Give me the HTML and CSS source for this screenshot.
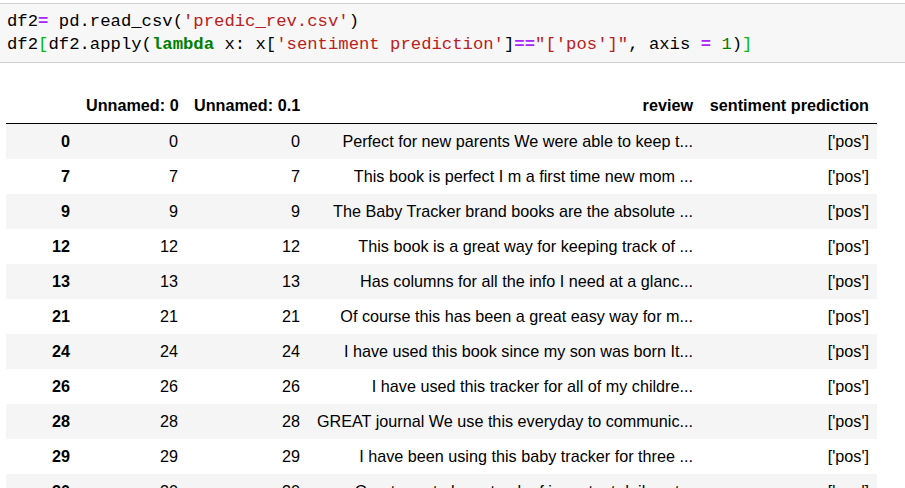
FILE: index.html
```html
<!DOCTYPE html>
<html>
<head>
<meta charset="utf-8">
<link rel="stylesheet" href="styles.css">
</head>
<body>
<div class="cell">
<pre class="code">df2<span class="op">=</span> pd.read_csv(<span class="str">'predic_rev.csv'</span>)
df2<span class="br">[</span>df2.apply(<span class="kw">lambda</span> x: x[<span class="str">'sentiment prediction'</span>]<span class="op">==</span><span class="str">"['pos']"</span>, axis <span class="op">=</span> <span class="num">1</span>)<span class="br">]</span></pre>
</div>
<table class="df">
<colgroup>
<col class="c0"><col class="c1"><col class="c2"><col class="c3"><col class="c4">
</colgroup>
<thead>
<tr><th></th><th>Unnamed: 0</th><th>Unnamed: 0.1</th><th>review</th><th>sentiment prediction</th></tr>
</thead>
<tbody>
<tr><th>0</th><td>0</td><td>0</td><td>Perfect for new parents We were able to keep t...</td><td>['pos']</td></tr>
<tr><th>7</th><td>7</td><td>7</td><td>This book is perfect I m a first time new mom ...</td><td>['pos']</td></tr>
<tr><th>9</th><td>9</td><td>9</td><td>The Baby Tracker brand books are the absolute ...</td><td>['pos']</td></tr>
<tr><th>12</th><td>12</td><td>12</td><td>This book is a great way for keeping track of ...</td><td>['pos']</td></tr>
<tr><th>13</th><td>13</td><td>13</td><td>Has columns for all the info I need at a glanc...</td><td>['pos']</td></tr>
<tr><th>21</th><td>21</td><td>21</td><td>Of course this has been a great easy way for m...</td><td>['pos']</td></tr>
<tr><th>24</th><td>24</td><td>24</td><td>I have used this book since my son was born It...</td><td>['pos']</td></tr>
<tr><th>26</th><td>26</td><td>26</td><td>I have used this tracker for all of my childre...</td><td>['pos']</td></tr>
<tr><th>28</th><td>28</td><td>28</td><td>GREAT journal We use this everyday to communic...</td><td>['pos']</td></tr>
<tr><th>29</th><td>29</td><td>29</td><td>I have been using this baby tracker for three ...</td><td>['pos']</td></tr>
<tr><th>30</th><td>30</td><td>30</td><td>Great way to keep track of important daily act...</td><td>['pos']</td></tr>
</tbody>
</table>
</body>
</html>
```
FILE: styles.css
```css
html, body {
  margin: 0;
  padding: 0;
  background: #ffffff;
  overflow: hidden;
}
.cell {
  margin-top: 3px;
  background: #f7f7f7;
  border-top: 1px solid #cfcfcf;
  border-bottom: 1px solid #cfcfcf;
  padding: 6px 0 6px 7px;
}
.code {
  margin: 0;
  font-family: "Liberation Mono", "DejaVu Sans Mono", monospace;
  font-size: 17.25px;
  line-height: 23px;
  color: #000;
}
.op { color: #aa22ff; font-weight: bold; }
.str { color: #ba2121; }
.kw { color: #008000; font-weight: bold; }
.num { color: #008000; }
.br { color: #00bb00; }
.df {
  margin: 25px 0 0 6px;
  border-collapse: collapse;
  table-layout: fixed;
  width: 871px;
  font-family: "Liberation Sans", Arial, sans-serif;
  font-size: 16.2px;
  color: #000;
}
.c0 { width: 72px; }
.c1 { width: 108px; }
.c2 { width: 122px; }
.c3 { width: 393px; }
.c4 { width: 176px; }
.df th, .df td {
  height: 35px;
  padding: 0 8px;
  text-align: right;
  white-space: nowrap;
  vertical-align: middle;
}
.df thead th {
  border-bottom: 1px solid #000;
  font-weight: bold;
}
.df tbody th { font-weight: bold; }
.df tbody tr:nth-child(odd) { background: #f5f5f5; }
```
